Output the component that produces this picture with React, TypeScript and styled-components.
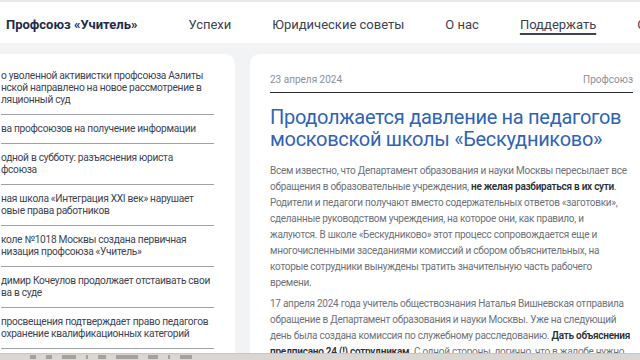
import React from "react";
import styled, { createGlobalStyle } from "styled-components";

const Global = createGlobalStyle`
  html, body { margin: 0; padding: 0; }
  body {
    background: #f1f3f4;
    font-family: Roboto, "Noto Sans", sans-serif;
    overflow: hidden;
    width: 640px;
    height: 360px;
  }
`;

const Page = styled.div`
  width: 640px;
  height: 360px;
  overflow: hidden;
  position: relative;
`;

const Header = styled.header`
  height: 38px;
  background: #ffffff;
  border-top: 2px solid #e7e8e9;
  display: flex;
  align-items: center;
  padding: 3px 0 0 6px;
  gap: 51px;
  white-space: nowrap;
  overflow: hidden;
`;

const Logo = styled.div`
  font-size: 13px;
  font-weight: 700;
  color: #1f2b4a;
`;

const Nav = styled.nav`
  display: flex;
  gap: 41px;
`;

const NavItem = styled.a<{ $active?: boolean }>`
  font-size: 13px;
  color: #3a4254;
  text-decoration: ${(p) => (p.$active ? "underline" : "none")};
  text-underline-offset: 4px;
  text-decoration-thickness: 1.5px;
`;

const Main = styled.main`
  display: grid;
  grid-template-columns: 235px 400px;
  gap: 15px;
  padding-top: 11px;
`;

const Side = styled.aside`
  background: #ffffff;
  border-radius: 0 10px 0 0;
  padding: 16px 21px 0 1px;
  height: 320px;
`;

const SideItem = styled.div`
  font-size: 10.2px;
  letter-spacing: -0.3px;
  line-height: 12px;
  color: #3d4352;
  padding: 8px 0;
  border-bottom: 1px solid #9ea1a7;
  white-space: nowrap;
  &:first-child { padding-top: 0; }
`;

const Article = styled.article`
  background: #ffffff;
  border-radius: 10px 0 0 0;
  padding: 20px 0 0 20px;
  height: 320px;
`;

const Inner = styled.div`
  width: 363px;
`;

const Meta = styled.div`
  display: flex;
  justify-content: space-between;
  font-size: 10px;
  line-height: 12px;
  color: #8b9097;
  padding-bottom: 6px;
  border-bottom: 1.5px solid #2a2b2e;
`;

const Title = styled.h1`
  margin: 13px 0 0;
  font-size: 20px;
  letter-spacing: -0.3px;
  line-height: 22px;
  font-weight: 400;
  color: #3063b4;
  white-space: nowrap;
`;

const Para = styled.p`
  margin: 13px 0 0;
  font-size: 10px;
  letter-spacing: -0.26px;
  line-height: 16px;
  color: #6d727a;
  white-space: nowrap;
  & + & { margin-top: 5px; }
`;

const Strong = styled.b`
  font-weight: 600;
  color: #2c3038;
`;

const Taskbar = styled.div`
  position: fixed;
  left: 0;
  bottom: 0;
  width: 640px;
  height: 6px;
  background: #dad7d2;
  border-top: 1px solid #c9c6c1;
  display: flex;
  align-items: center;
  gap: 10px;
  padding-left: 30px;
`;

const Mark = styled.span<{ $w: number }>`
  display: inline-block;
  width: ${(p) => p.$w}px;
  height: 4px;
  background: #8e8b86;
  opacity: 0.7;
`;

const sideItems: string[][] = [
  ["о уволенной активистки профсоюза Аэлиты", "нской направлено на новое рассмотрение в", "ляционный суд"],
  ["ва профсоюзов на получение информации"],
  ["одной в субботу: разъяснения юриста", "фсоюза"],
  ["ная школа «Интеграция XXI век» нарушает", "овые права работников"],
  ["коле №1018 Москвы создана первичная", "низация профсоюза «Учитель»"],
  ["димир Кочеулов продолжает отстаивать свои", "ва в суде"],
  ["просвещения подтверждает право педагогов", "охранение квалификационных категорий"],
];

const para1: React.ReactNode[] = [
  "Всем известно, что Департамент образования и науки Москвы пересылает все",
  <>обращения в образовательные учреждения, <Strong>не желая разбираться в их сути</Strong>.</>,
  "Родители и педагоги получают вместо содержательных ответов «заготовки»,",
  "сделанные руководством учреждения, на которое они, как правило, и",
  "жалуются. В школе «Бескудниково» этот процесс сопровождается еще и",
  "многочисленными заседаниями комиссий и сбором объяснительных, на",
  "которые сотрудники вынуждены тратить значительную часть рабочего",
  "времени.",
];

const para2: React.ReactNode[] = [
  "17 апреля 2024 года учитель обществознания Наталья Вишневская отправила",
  "обращение в Департамент образования и науки Москвы. Уже на следующий",
  <>день была создана комиссия по служебному расследованию. <Strong>Дать объяснения</Strong></>,
  <><Strong>предписано 24 (!) сотрудникам</Strong>. С одной стороны, логично, что в жалобе нужно</>,
];

function Lines({ items }: { items: React.ReactNode[] }) {
  return (
    <>
      {items.map((l, j) => (
        <React.Fragment key={j}>
          {j > 0 && <br />}
          {l}
        </React.Fragment>
      ))}
    </>
  );
}

export default function App() {
  return (
    <Page>
      <Global />
      <Header>
        <Logo>Профсоюз «Учитель»</Logo>
        <Nav>
          <NavItem>Успехи</NavItem>
          <NavItem>Юридические советы</NavItem>
          <NavItem>О нас</NavItem>
          <NavItem $active>Поддержать</NavItem>
          <NavItem>Связаться</NavItem>
        </Nav>
      </Header>
      <Main>
        <Side>
          {sideItems.map((lines, i) => (
            <SideItem key={i}>
              <Lines items={lines} />
            </SideItem>
          ))}
        </Side>
        <Article>
          <Inner>
            <Meta>
              <span>23 апреля 2024</span>
              <span>Профсоюз</span>
            </Meta>
            <Title>
              Продолжается давление на педагогов
              <br />
              московской школы «Бескудниково»
            </Title>
            <Para>
              <Lines items={para1} />
            </Para>
            <Para>
              <Lines items={para2} />
            </Para>
          </Inner>
        </Article>
      </Main>
      <Taskbar>
        <Mark $w={6} />
        <Mark $w={6} />
        <Mark $w={14} />
        <Mark $w={2} />
        <Mark $w={8} />
        <Mark $w={22} />
        <Mark $w={10} />
        <Mark $w={2} />
        <Mark $w={12} />
      </Taskbar>
    </Page>
  );
}
